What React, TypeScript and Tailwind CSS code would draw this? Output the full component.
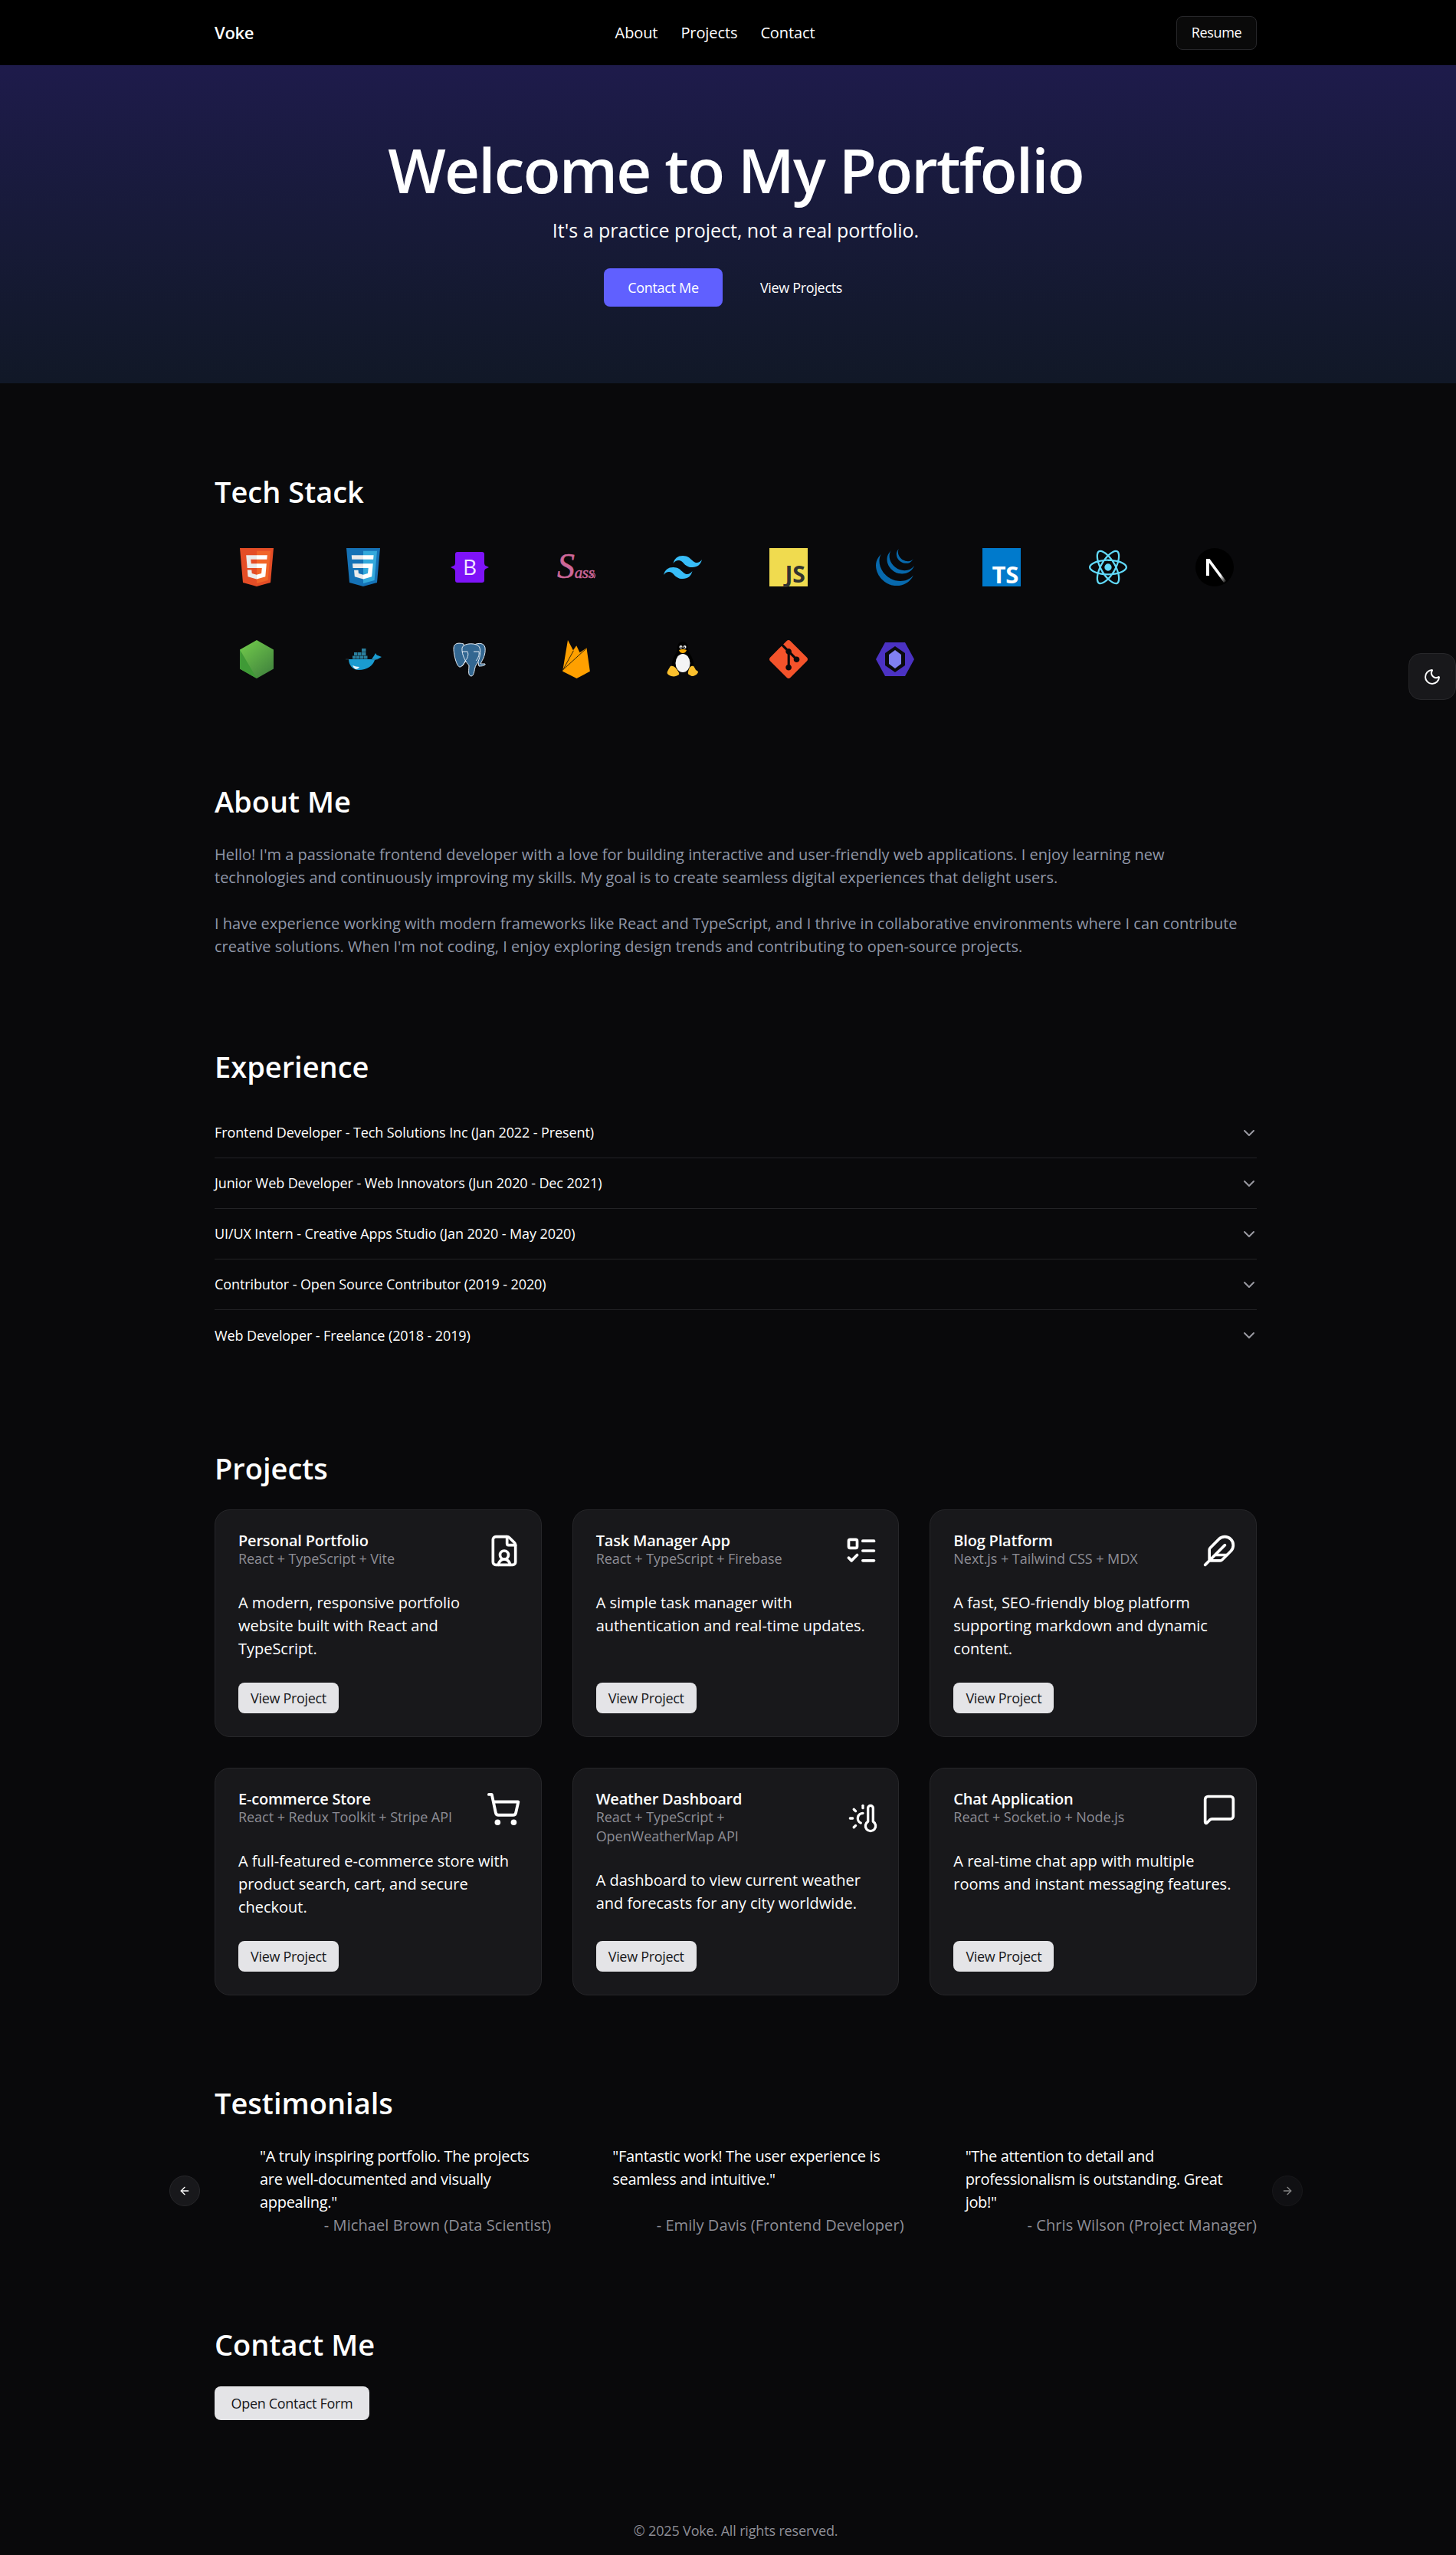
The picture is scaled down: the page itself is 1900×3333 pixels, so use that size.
import React from 'react'
import { ArrowLeft, ArrowRight, ChevronDown, Feather, FileUser, ListTodo, MessageSquare, Moon, ShoppingCart, ThermometerSun } from 'lucide-react'
import { SiGit, SiJquery, SiReact, SiTailwindcss } from 'react-icons/si'

const Html5 = () => (
  <svg viewBox="30 0 451 512" className="h-[50px] w-[44px]">
    <path fill="#e44d26" d="M71 460 30 0h451l-41 460-185 52" />
    <path fill="#f16529" d="M256 472l149-41 35-394H256" />
    <path fill="#ebebeb" d="M256 208h-75l-5-58h80V94H114l15 171h127zm-1 147h-1l-63-17-4-45h-56l7 89 116 32h1z" />
    <path fill="#fff" d="M255 208v57h70l-7 73-63 17v59l116-32 16-174zM255 94v56h137l5-56z" />
  </svg>
)

const Css3 = () => (
  <svg viewBox="30 0 451 512" className="h-[50px] w-[44px]">
    <path fill="#1572b6" d="M71 460 30 0h451l-41 460-185 52" />
    <path fill="#33a9dc" d="M256 472l149-41 35-394H256" />
    <path fill="#ebebeb" d="M256 208H112l5 57h139zm0-114H99l5 57h152zm0 261-1 1-62-17-4-44h-56l8 87 115 32 1-1z" />
    <path fill="#fff" d="M255 208v57h69l-7 73-62 17v59l115-32 16-174zm0-114v56h135l5-56z" />
  </svg>
)

const Bootstrap = () => (
  <svg viewBox="0 0 50 40" className="h-[40px] w-[50px]">
    <path fill="#7e13f8" d="M6 3q0-3 3-3h32q3 0 3 3v11q0 4 3 4.500l3 1.500-3 1.500q-3 .5-3 4.500v11q0 3-3 3H9q-3 0-3-3V26q0-4-3-4.500L0 20l3-1.500q3-.5 3-4.500z" />
    <text x="25" y="30" textAnchor="middle" fontFamily="'Open Sans',sans-serif" fontSize="28" fontWeight="500" fill="#f3e8ff">B</text>
  </svg>
)

const Sass = () => (
  <svg viewBox="0 0 50 37" className="h-[37px] w-[50px] overflow-visible">
    <text x="0" y="32" fontFamily="'Liberation Serif',serif" fontStyle="italic" fill="#cd6799" stroke="#cd6799" strokeWidth="0.5" fontSize="21">
      <tspan fontSize="46">S</tspan>ass
    </text>
    <path fill="none" stroke="#cd6799" strokeWidth="1.200" d="M42 30c3 0 4-5 6-4 2 1 2 4 0 6" />
  </svg>
)

const Js = () => (
  <div className="flex h-[50px] w-[50px] items-end justify-end bg-[#f0db4f] pr-[4px] pb-px text-[30px] leading-[30px] font-bold text-[#323330]">JS</div>
)

const Ts = () => (
  <div className="flex h-[50px] w-[50px] items-end justify-end bg-[#007acc] pr-[3px] pb-px text-[31px] leading-[30px] font-bold text-white">TS</div>
)

const NextLogo = () => (
  <svg viewBox="0 0 50 50" className="h-[50px] w-[50px]">
    <defs>
      <linearGradient id="next-fade" x1="0" y1="0" x2="1" y2="1">
        <stop offset="0.7" stopColor="#fff" />
        <stop offset="1" stopColor="#fff" stopOpacity="0" />
      </linearGradient>
    </defs>
    <circle cx="25" cy="25" r="25" fill="#000" />
    <rect x="14" y="14" width="4" height="22" fill="#fff" />
    <path fill="url(#next-fade)" d="M14 14h4.500L40 43l-3 2z" />
  </svg>
)

const Node = () => (
  <svg viewBox="0 0 44 50" className="h-[50px] w-[44px]">
    <defs>
      <linearGradient id="node-fill" x1="0.2" y1="0.1" x2="0.8" y2="0.9">
        <stop offset="0" stopColor="#6cc24a" />
        <stop offset="1" stopColor="#44883e" />
      </linearGradient>
    </defs>
    <path fill="url(#node-fill)" d="M22 0l22 12.500v25L22 50 0 37.500v-25z" />
    <path fill="#3f9a36" d="M0 12.500 22 50 0 37.500z" />
  </svg>
)

const Docker = () => (
  <svg viewBox="0 0 47 28" className="h-[28px] w-[47px]">
    <g fill="#2a7f9e">
      <rect x="21" y="0" width="5.500" height="4.500" />
      <rect x="11" y="5" width="4.500" height="4" />
      <rect x="16" y="5" width="4.500" height="4" />
      <rect x="21" y="5" width="5.500" height="4" />
      <rect x="9" y="9.500" width="4.500" height="4" />
      <rect x="14" y="9.500" width="4.500" height="4" />
      <rect x="19" y="9.500" width="4.500" height="4" />
      <rect x="24" y="9.500" width="4.500" height="4" />
    </g>
    <path fill="#1a9bd0" d="M4 14H34C36 11 38 8 39 6c1 2 2 3 3 3l5 2c-3 2-6 3-9 4-2 7-10 13-21 13C9 28 4 21 4 14z" />
    <path fill="#e8f4fa" d="M9 22c3 1 6 2 9 2-1 2-3 3-5 3-2-1-3-3-4-5z" />
    <path stroke="#3a5563" strokeWidth="0.6" d="M0 14h4M34 14h8" />
  </svg>
)

const Postgres = () => (
  <svg viewBox="0 0 43 45" className="h-[45px] w-[43px]">
    <g fill="#336791" stroke="#e5edf5" strokeWidth="1">
      <path d="M28 3c6-3 13-2 14 4 1 9-3 15-6 21h6c1 2-3 3-8 3z" />
      <path d="M14 2C7 0 1 1 1 8c0 8 4 24 8 24 4 0 4-5 8-7z" />
      <path d="M12 7c2-7 21-7 23 0 2 8-1 18-5 23-2 3-2 14-6 14-5 0-3-9-3-14-3-3-10-13-9-23z" />
    </g>
    <path fill="none" stroke="#e5edf5" strokeWidth="1" d="M12 12h7c2 4 0 9-3 12-1 3-2 6-5 7M27 12h7c1 5-2 10-4 12" />
  </svg>
)

const Firebase = () => (
  <svg viewBox="0 0 35 49" className="h-[50px] w-[36px]">
    <path fill="#ffa000" d="M0 40 6.700 0l6.800 13L17.700 7l4.300 9L30.700 10 35 40 18 49z" />
    <path fill="none" stroke="#0a0a0c" strokeWidth="0.8" d="M0.500 38 14 13.500M0.500 38 30 11" />
  </svg>
)

const Tux = () => (
  <svg viewBox="0 0 41 46" className="h-[46px] w-[41px]">
    <path fill="#000" d="M21 0c5 0 7 4 7 9 0 5 6 11 7 18 1 5-2 10-6 12H13c-4-2-7-7-6-12 1-7 7-13 7-18 0-5 2-9 7-9z" />
    <ellipse cx="21" cy="28" rx="9.500" ry="12" fill="#f4f4f4" />
    <circle cx="18.500" cy="7" r="2" fill="#fff" />
    <circle cx="23.500" cy="7" r="2" fill="#fff" />
    <circle cx="18.800" cy="7.300" r="0.900" fill="#111" />
    <circle cx="23.200" cy="7.300" r="0.900" fill="#111" />
    <path fill="#f5a800" d="M16 11c2-1.500 8-1.500 10 0-1 3-3 4-5 4s-4-1-5-4z" />
    <path fill="#fbc02d" d="M5 32c3-1 6 1 8 4 2 3 4 5 3 7-3 2-6 3-10 2-3-1-4-2-5-3-1-2 0-3 1-5 1-2 2-4 3-5z" />
    <path fill="#fbc02d" d="M35 32c-3-1-5 1-6 4-1 3-2 6 0 7 3 2 5 3 8 1 2-1 3-2 4-4 0-2-2-2-3-3-1-2-2-4-3-5z" />
  </svg>
)

const Eslint = () => (
  <svg viewBox="0 0 50 44" className="h-[44px] w-[50px]">
    <path fill="#4b32c3" d="M12 0h26l12 22-12 22H12L0 22z" />
    <path fill="#0a0a0c" d="M25 5l13 9v16l-13 9-13-9V14z" />
    <path fill="#8080f2" d="M25 10l8 6v12l-8 6-8-6V16z" />
  </svg>
)

const techRow = [
  <Html5 key="html" />,
  <Css3 key="css" />,
  <Bootstrap key="bootstrap" />,
  <Sass key="sass" />,
  <SiTailwindcss key="tailwind" size={50} color="#38bdf8" />,
  <Js key="js" />,
  <SiJquery key="jquery" size={50} color="#0769ad" />,
  <Ts key="ts" />,
  <SiReact key="react" size={50} color="#61dafb" />,
  <NextLogo key="next" />,
  <Node key="node" />,
  <Docker key="docker" />,
  <Postgres key="postgres" />,
  <Firebase key="firebase" />,
  <Tux key="tux" />,
  <SiGit key="git" size={50} color="#f4532b" />,
  <Eslint key="eslint" />,
]

const experience = [
  'Frontend Developer - Tech Solutions Inc (Jan 2022 - Present)',
  'Junior Web Developer - Web Innovators (Jun 2020 - Dec 2021)',
  'UI/UX Intern - Creative Apps Studio (Jan 2020 - May 2020)',
  'Contributor - Open Source Contributor (2019 - 2020)',
  'Web Developer - Freelance (2018 - 2019)',
]

const projects = [
  { name: 'Personal Portfolio', stack: 'React + TypeScript + Vite', text: 'A modern, responsive portfolio website built with React and TypeScript.', icon: <FileUser size={44} /> },
  { name: 'Task Manager App', stack: 'React + TypeScript + Firebase', text: 'A simple task manager with authentication and real-time updates.', icon: <ListTodo size={44} /> },
  { name: 'Blog Platform', stack: 'Next.js + Tailwind CSS + MDX', text: 'A fast, SEO-friendly blog platform supporting markdown and dynamic content.', icon: <Feather size={44} /> },
  { name: 'E-commerce Store', stack: 'React + Redux Toolkit + Stripe API', text: 'A full-featured e-commerce store with product search, cart, and secure checkout.', icon: <ShoppingCart size={46} /> },
  { name: 'Weather Dashboard', stack: 'React + TypeScript + OpenWeatherMap API', text: 'A dashboard to view current weather and forecasts for any city worldwide.', icon: <ThermometerSun size={40} /> },
  { name: 'Chat Application', stack: 'React + Socket.io + Node.js', text: 'A real-time chat app with multiple rooms and instant messaging features.', icon: <MessageSquare size={44} /> },
]

const testimonials = [
  { quote: '"A truly inspiring portfolio. The projects are well-documented and visually appealing."', by: '- Michael Brown (Data Scientist)' },
  { quote: '"Fantastic work! The user experience is seamless and intuitive."', by: '- Emily Davis (Frontend Developer)' },
  { quote: '"The attention to detail and professionalism is outstanding. Great job!"', by: '- Chris Wilson (Project Manager)' },
]

export default function App() {
  return (
    <div className="w-full overflow-hidden bg-[#09090b]">
      <div className="relative w-[1920px] h-[3333px] font-['Open_Sans','Liberation_Sans',sans-serif] text-white tracking-[-0.02em]">
        {/* Header */}
        <header className="h-[85px] bg-black">
          <div className="mx-auto flex h-full w-[1360px] items-center justify-between">
            <span className="text-[22px] font-semibold">Voke</span>
            <nav className="flex gap-[30px] text-[20px] tracking-[-0.1px]">
              <a>About</a>
              <a>Projects</a>
              <a>Contact</a>
            </nav>
            <button className="h-[44px] w-[105px] rounded-lg border border-[#27272a] bg-[#0a0a0a] text-[18px]">Resume</button>
          </div>
        </header>

        {/* Hero */}
        <section className="h-[415px] bg-gradient-to-b from-[#1e1b4b] to-[#111827] pt-[88px] text-center">
          <h1 className="mb-[13px] text-[80px] leading-[96px] font-[550] tracking-[-0.023em]">Welcome to My Portfolio</h1>
          <p className="mb-[32px] text-[25px] leading-[36px] tracking-normal">It's a practice project, not a real portfolio.</p>
          <div className="flex justify-center gap-4">
            <button className="h-[50px] w-[155px] rounded-lg bg-[#6060ff] text-[18px]">Contact Me</button>
            <button className="h-[50px] w-[173px] rounded-lg text-[18px]">View Projects</button>
          </div>
        </section>

        <main className="mx-auto flex w-[1360px] flex-col gap-[120px] pt-[121px]">
          {/* Tech Stack */}
          <section>
            <h2 className="mb-[54px] text-[38px] leading-[40px] font-[550] tracking-normal">Tech Stack</h2>
            <div className="grid grid-cols-10 gap-x-7 gap-y-[70px] pb-[20px]">
              {techRow.map((icon) => (
                <div key={icon.key} className="flex h-[50px] items-center justify-center">{icon}</div>
              ))}
            </div>
          </section>

          {/* About */}
          <section>
            <h2 className="mb-[35px] text-[38px] leading-[40px] font-[550] tracking-normal">About Me</h2>
            <p className="max-w-[1340px] pb-px text-[20px] leading-[30px] tracking-normal text-[#9097a8]">
              Hello! I'm a passionate frontend developer with a love for building interactive and user-friendly web applications. I enjoy learning new technologies and continuously improving my skills. My goal is to create seamless digital experiences that delight users.
              <br />
              <br />
              I have experience working with modern frameworks like React and TypeScript, and I thrive in collaborative environments where I can contribute creative solutions. When I'm not coding, I enjoy exploring design trends and contributing to open-source projects.
            </p>
          </section>

          {/* Experience */}
          <section>
            <h2 className="mb-[34px] text-[38px] leading-[40px] font-[550] tracking-normal">Experience</h2>
            <div>
              {experience.map((job, i) => (
                <div key={job} className={`flex h-[66px] items-center justify-between text-[18px] tracking-[-0.1px] ${i < 4 ? 'border-b border-[#232326]' : ''}`}>
                  <span>{job}</span>
                  <ChevronDown size={24} className="-mr-0.5 text-[#9a9aa2]" />
                </div>
              ))}
            </div>
          </section>

          {/* Projects */}
          <section>
            <h2 className="mb-[34px] text-[38px] leading-[40px] font-[550] tracking-normal">Projects</h2>
            <div className="grid grid-cols-3 gap-10">
              {projects.map((p) => (
                <div key={p.name} className="flex h-[297px] flex-col rounded-[20px] border border-[#27272a] bg-[#18181b] px-[30px] pt-[29px] pb-[30px]">
                  <div className="flex items-center justify-between gap-4">
                    <div>
                      <h3 className="text-[20px] leading-[22px] font-semibold tracking-[-0.01em]">{p.name}</h3>
                      <p className="text-[18px] leading-[25px] tracking-[-0.05px] text-[#8e8e96]">{p.stack}</p>
                    </div>
                    <span className="-mr-1 shrink-0">{p.icon}</span>
                  </div>
                  <p className="mt-[30px] text-[20px] leading-[30px] tracking-[-0.02px]">{p.text}</p>
                  <button className="mt-auto h-[40px] w-[131px] rounded-lg bg-[#e4e4e7] text-[18px] text-[#18181b]">View Project</button>
                </div>
              ))}
            </div>
          </section>

          {/* Testimonials */}
          <section>
            <h2 className="mb-[35px] text-[38px] leading-[40px] font-[550] tracking-normal">Testimonials</h2>
            <div className="relative pl-[59px]">
              <div className="grid grid-cols-3 gap-20">
                {testimonials.map((t) => (
                  <div key={t.by}>
                    <p className="h-[90px] text-[20px] leading-[30px]">{t.quote}</p>
                    <p className="text-right text-[20px] leading-[30px] tracking-[0.08px] text-[#8e8e96]">{t.by}</p>
                  </div>
                ))}
              </div>
              <button className="absolute -left-[59px] top-[40px] flex h-10 w-10 items-center justify-center rounded-full border border-[#27272a] bg-[#18181b]">
                <ArrowLeft size={16} />
              </button>
              <button className="absolute -right-[60px] top-[40px] flex h-10 w-10 items-center justify-center rounded-full border border-[#27272a] bg-[#18181b] opacity-50">
                <ArrowRight size={16} />
              </button>
            </div>
          </section>

          {/* Contact */}
          <section>
            <h2 className="mb-[35px] text-[38px] leading-[40px] font-[550] tracking-normal">Contact Me</h2>
            <button className="h-[44px] w-[202px] rounded-lg bg-[#e4e4e7] text-[18px] text-[#18181b]">Open Contact Form</button>
          </section>
        </main>

        <footer className="mt-[130px] text-center text-[18px] leading-[28px] tracking-[-0.16px] text-[#8e8e96]">© 2025 Voke. All rights reserved.</footer>

        {/* Theme toggle */}
        <button className="absolute right-5 top-[852px] flex h-[61px] w-[62px] items-center justify-center rounded-2xl border border-[#27272a] bg-[#18181b]">
          <Moon size={24} />
        </button>
      </div>
    </div>
  )
}
